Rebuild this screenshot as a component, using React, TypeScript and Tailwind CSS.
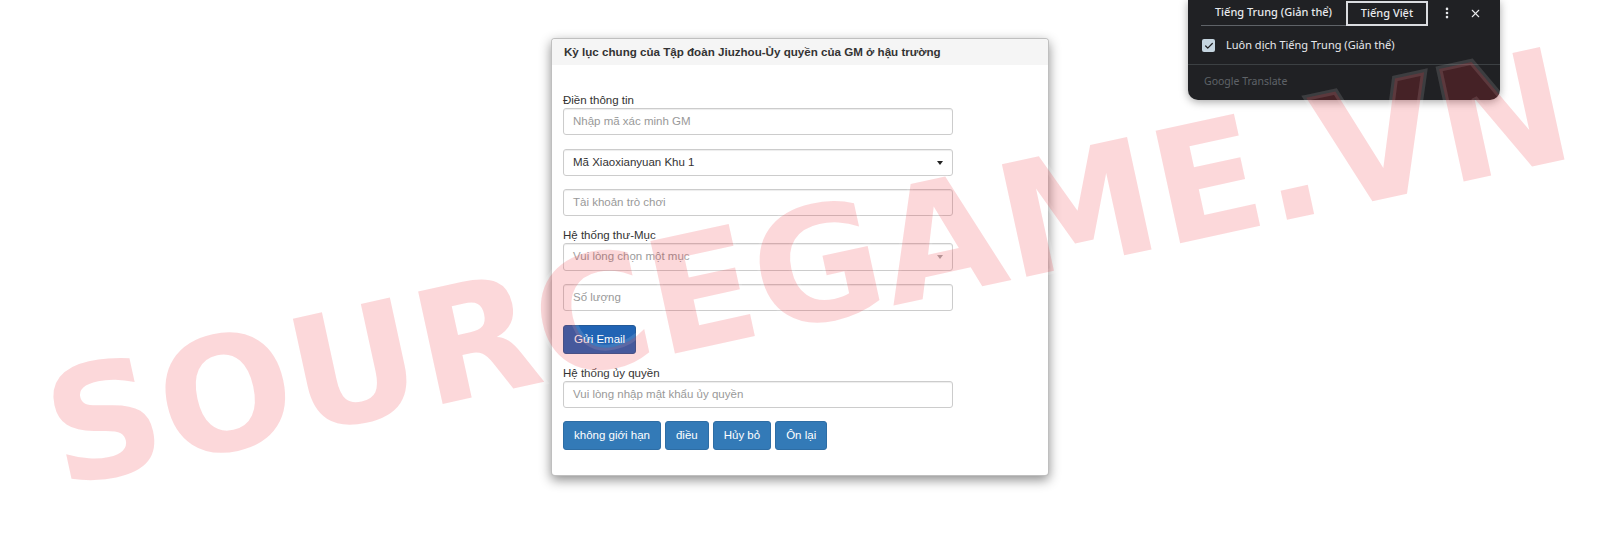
import React from 'react';
import { Check, EllipsisVertical, X } from 'lucide-react';

const field =
  'w-[390px] rounded-[3px] border border-[#ccc] bg-white px-[9px] flex items-center text-[11.5px] shadow-[inset_0_1px_1px_rgba(0,0,0,0.075)]';

const Caret = ({ muted }: { muted?: boolean }) => (
  <span
    className={`w-0 h-0 border-x-[3.5px] border-x-transparent border-t-[4px] ${
      muted ? 'border-t-[#aaa]' : 'border-t-[#222]'
    }`}
  />
);

const Btn = ({ children, className = '' }: { children: React.ReactNode; className?: string }) => (
  <button
    className={`h-[29px] rounded-[3px] border border-[#2e6da4] bg-[#337ab7] px-[10px] text-[11.5px] text-white ${className}`}
  >
    {children}
  </button>
);

export default function App() {
  return (
    <div
      className="relative h-[533px] w-full overflow-hidden bg-white"
      style={{ fontFamily: '"Liberation Sans", Arial, sans-serif' }}
    >
      <div className="flex justify-center pt-[38px]">
        <div className="w-[498px] overflow-hidden rounded-[4px] border border-black/25 bg-white shadow-[0_4px_12px_rgba(0,0,0,0.45)]">
          <div className="flex h-[26px] items-center bg-[#f5f5f5] px-[12px] text-[11.6px] font-bold text-[#333]">
            Kỳ lục chung của Tập đoàn Jiuzhou-Ủy quyền của GM ở hậu trường
          </div>
          <div className="flex flex-col items-start px-[11px] pt-[28px] pb-[25px] text-[#333]">
            <label className="h-[15px] text-[11.5px] leading-[15px]">Điền thông tin</label>
            <div className={`${field} h-[27px] text-[#999]`}>Nhập mã xác minh GM</div>

            <div className={`${field} mt-[14px] h-[27px] justify-between text-[#333]`}>
              <span>Mã Xiaoxianyuan Khu 1</span>
              <Caret />
            </div>

            <div className={`${field} mt-[13px] h-[27px] text-[#999]`}>Tài khoản trò chơi</div>

            <label className="mt-[12px] h-[15px] text-[11.5px] leading-[15px]">Hệ thống thư-Mục</label>
            <div className={`${field} h-[28px] justify-between text-[#999]`}>
              <span>Vui lòng chọn một mục</span>
              <Caret muted />
            </div>

            <div className={`${field} mt-[13px] h-[27px] text-[#999]`}>Số lượng</div>

            <Btn className="mt-[14px] border-[#245a98] bg-[#2164b4]">Gửi Email</Btn>

            <label className="mt-[12px] h-[15px] text-[11.5px] leading-[15px]">Hệ thống ủy quyền</label>
            <div className={`${field} h-[27px] text-[#999]`}>Vui lòng nhập mật khẩu ủy quyền</div>

            <div className="mt-[13px] flex gap-[4px]">
              <Btn>không giới hạn</Btn>
              <Btn>điều</Btn>
              <Btn>Hủy bỏ</Btn>
              <Btn>Ôn lại</Btn>
            </div>
          </div>
        </div>
      </div>

      {/* translate popup */}
      <div
        className="absolute left-[1188px] top-0 h-[100px] w-[312px] rounded-b-[10px] bg-[#202124] text-[#e8eaed] shadow-[0_2px_8px_rgba(0,0,0,0.35)]"
        style={{ fontFamily: '"Noto Sans", "Open Sans", sans-serif' }}
      >
        <div className="flex h-[26px] items-stretch pl-[13px]">
          <div className="flex w-[145px] items-center justify-center border-b border-[#5f6368] text-[11px] font-medium">
            Tiếng Trung (Giản thể)
          </div>
          <div className="mt-[1px] flex w-[82px] items-center justify-center border-2 border-[#dadce0] text-[11px] font-medium">
            Tiếng Việt
          </div>
          <div className="flex w-[38px] items-center justify-center">
            <EllipsisVertical size={14} strokeWidth={2.5} />
          </div>
          <div className="flex w-[18px] items-center justify-center">
            <X size={13} strokeWidth={2} />
          </div>
        </div>
        <div className="flex h-[39px] items-center gap-[11px] border-b border-[#3c4043] pl-[14px] pt-[1px]">
          <span className="flex h-[13px] w-[13px] items-center justify-center rounded-[2px] bg-[#c5d5e0]">
            <Check size={10} strokeWidth={3} color="#202124" />
          </span>
          <span className="text-[11px]">Luôn dịch Tiếng Trung (Giản thể)</span>
        </div>
        <div className="flex h-[33px] items-center pl-[16px] text-[10.5px] text-[#5f6368]">Google Translate</div>
      </div>

      {/* watermark */}
      <div
        className="pointer-events-none absolute left-[808px] top-[268px] -translate-x-1/2 -translate-y-1/2 rotate-[-12.3deg] whitespace-nowrap text-[158px] font-bold leading-none text-[rgba(240,40,50,0.18)] [-webkit-text-stroke:6px_rgba(255,255,255,0.13)] [paint-order:stroke_fill]"
        style={{ fontFamily: '"DejaVu Sans", sans-serif' }}
      >
        SOURCEGAME.VN
      </div>
    </div>
  );
}
